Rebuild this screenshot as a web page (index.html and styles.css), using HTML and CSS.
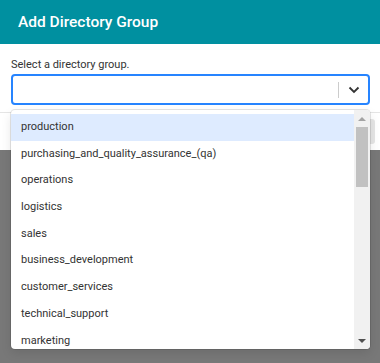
FILE: index.html
```html
<!DOCTYPE html>
<html>
<head>
	<meta charset="utf-8">
	<title>Add Directory Group</title>
	<link rel="stylesheet" href="styles.css">
</head>
<body>
	<div class="modal">
		<div class="modal-header">
			<h1 class="modal-title">Add Directory Group</h1>
		</div>
		<div class="modal-body">
			<label class="field-label">Select a directory group.</label>
			<div class="select">
				<div class="select-value"></div>
				<span class="select-sep"></span>
				<span class="select-arrow">
					<svg width="12" height="8" viewBox="0 0 12 8"><path d="M1.5 1.5 L6 6 L10.5 1.5" fill="none" stroke="#333" stroke-width="1.8"/></svg>
				</span>
			</div>
		</div>
		<div class="modal-footer">
			<button class="btn">Cancel</button>
		</div>
	</div>

	<div class="menu">
		<div class="menu-list">
			<div class="option active">production</div>
			<div class="option">purchasing_and_quality_assurance_(qa)</div>
			<div class="option">operations</div>
			<div class="option">logistics</div>
			<div class="option">sales</div>
			<div class="option">business_development</div>
			<div class="option">customer_services</div>
			<div class="option">technical_support</div>
			<div class="option">marketing</div>
		</div>
		<div class="scrollbar">
			<span class="sb-up"></span>
			<span class="sb-thumb"></span>
			<span class="sb-space"></span>
			<span class="sb-down"></span>
		</div>
	</div>
</body>
</html>
```

FILE: styles.css
```css
body{
	margin: 0;
	background-color: #787878;
	font-family: Roboto, "Liberation Sans", sans-serif;
	color: #333;
	cursor: default;
}
.modal{
	background-color: #fff;
	box-shadow: 0 4px 14px rgba(0,0,0,0.35);
}
.modal-header{
	height: 44px;
	background-color: #0090a0;
	padding: 0 18px;
	display: flex;
	align-items: center;
}
.modal-title{
	margin: 0;
	font-size: 15.5px;
	font-weight: 500;
	color: #fff;
}
.modal-body{
	padding: 14px 10px 7px 11px;
}
.field-label{
	display: block;
	font-size: 11px;
	line-height: 14px;
	margin-bottom: 2px;
}
.select{
	height: 27px;
	border: 2px solid #2684ff;
	border-radius: 4px;
	display: flex;
	align-items: center;
}
.select-value{
	flex: 1;
}
.select-sep{
	width: 1px;
	height: 16px;
	background-color: #ccc;
}
.select-arrow{
	width: 29px;
	display: flex;
	justify-content: center;
	align-items: center;
}
.modal-footer{
	border-top: 1px solid #e5e5e5;
	height: 37px;
	display: flex;
	justify-content: flex-end;
	align-items: center;
	padding-right: 5px;
}
.btn{
	height: 25px;
	width: 90px;
	border: 0;
	border-radius: 3px;
	background-color: #e6e6e6;
	font-family: inherit;
	font-size: 11px;
	color: #333;
}

/* react-select style dropdown menu, open over the modal */
.menu{
	position: absolute;
	top: 110px;
	left: 11px;
	width: 359px;
	height: 239px;
	background-color: #fff;
	border-radius: 4px;
	box-shadow: 0 0 0 1px rgba(0,0,0,0.1), 0 4px 11px rgba(0,0,0,0.1);
	overflow: hidden;
	display: flex;
}
.menu-list{
	flex: 1;
	padding-top: 4px;
	overflow: hidden;
}
.option{
	height: 26.7px;
	line-height: 26.7px;
	padding: 0 10px;
	font-size: 11px;
	color: #333;
	white-space: nowrap;
}
.option.active{
	background-color: #deebff;
}
.scrollbar{
	width: 16px;
	background-color: #f1f1f1;
	display: flex;
	flex-direction: column;
	align-items: center;
}
.sb-up, .sb-down{
	height: 17px;
	width: 16px;
	display: flex;
	justify-content: center;
	align-items: center;
}
.sb-up::before{
	content: "";
	border-left: 4px solid transparent;
	border-right: 4px solid transparent;
	border-bottom: 4px solid #a3a3a3;
}
.sb-down::before{
	content: "";
	border-left: 4px solid transparent;
	border-right: 4px solid transparent;
	border-top: 4px solid #505050;
}
.sb-thumb{
	width: 12px;
	height: 60px;
	background-color: #c1c1c1;
}
.sb-space{
	flex: 1;
}
```
